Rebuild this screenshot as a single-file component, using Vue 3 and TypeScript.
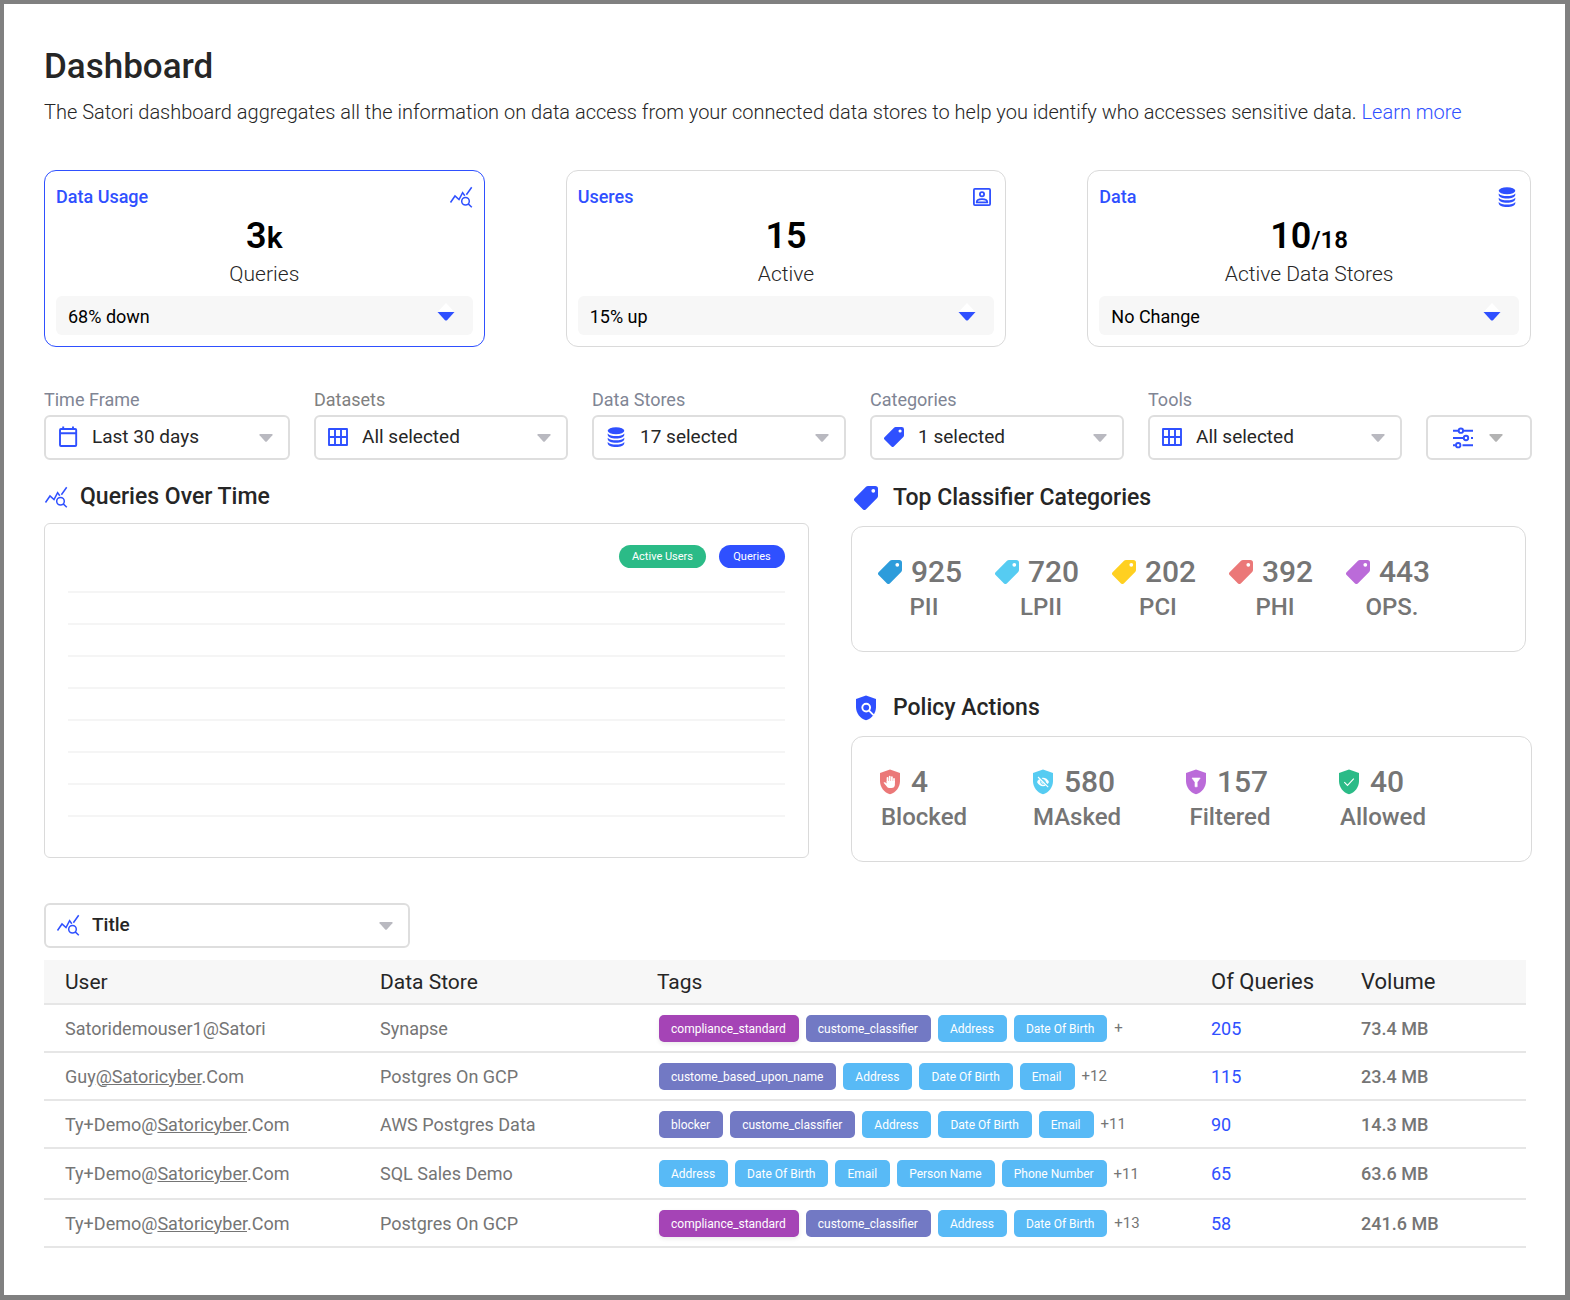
<script setup lang="ts">
interface Summary {
  title: string
  icon: string
  value: string
  suffix: string
  unit?: boolean
  caption: string
  trend: string
  active: boolean
}

interface Filter {
  id: string
  label: string
  icon: string
  value: string
  neutral?: boolean
}

interface Stat {
  icon: string
  color: string
  value: number
  caption: string
}

interface Tag {
  text: string
  kind: 'standard' | 'custom' | 'basic'
}

interface Row {
  user: [string, string, string]
  store: string
  tags: Tag[]
  more: string
  queries: number
  volume: string
}

const summaries: Summary[] = [
  { title: 'Data Usage', icon: 'query', value: '3', suffix: 'k', unit: true, caption: 'Queries', trend: '68% down', active: true },
  { title: 'Useres', icon: 'account', value: '15', suffix: '', caption: 'Active', trend: '15% up', active: false },
  { title: 'Data', icon: 'database', value: '10', suffix: '/18', caption: 'Active Data Stores', trend: 'No Change', active: false },
]

const filters: Filter[] = [
  { id: 'time-frame', label: 'Time Frame', icon: 'calendar', value: 'Last 30 days' },
  { id: 'datasets', label: 'Datasets', icon: 'grid', value: 'All selected', neutral: true },
  { id: 'data-stores', label: 'Data Stores', icon: 'database', value: '17 selected' },
  { id: 'categories', label: 'Categories', icon: 'tag', value: '1 selected' },
  { id: 'tools', label: 'Tools', icon: 'grid', value: 'All selected' },
]

const classifiers: Stat[] = [
  { icon: 'tag', color: '#2d9cdb', value: 925, caption: 'PII' },
  { icon: 'tag', color: '#56ccf2', value: 720, caption: 'LPII' },
  { icon: 'tag', color: '#ffd021', value: 202, caption: 'PCI' },
  { icon: 'tag', color: '#eb7878', value: 392, caption: 'PHI' },
  { icon: 'tag', color: '#bb6bd9', value: 443, caption: 'OPS.' },
]

const policies: Stat[] = [
  { icon: 'shield-hand', color: '#eb7878', value: 4, caption: 'Blocked' },
  { icon: 'shield-eye', color: '#56ccf2', value: 580, caption: 'MAsked' },
  { icon: 'shield-filter', color: '#bb6bd9', value: 157, caption: 'Filtered' },
  { icon: 'shield-check', color: '#2bbb87', value: 40, caption: 'Allowed' },
]

const standard: Tag = { text: 'compliance_standard', kind: 'standard' }
const classifier: Tag = { text: 'custome_classifier', kind: 'custom' }
const basedUpon: Tag = { text: 'custome_based_upon_name', kind: 'custom' }
const blocker: Tag = { text: 'blocker', kind: 'custom' }
const address: Tag = { text: 'Address', kind: 'basic' }
const birth: Tag = { text: 'Date Of Birth', kind: 'basic' }
const email: Tag = { text: 'Email', kind: 'basic' }
const person: Tag = { text: 'Person Name', kind: 'basic' }
const phone: Tag = { text: 'Phone Number', kind: 'basic' }

const rows: Row[] = [
  { user: ['Satoridemouser1@Satori', '', ''], store: 'Synapse', tags: [standard, classifier, address, birth], more: '+', queries: 205, volume: '73.4 MB' },
  { user: ['Guy', '@Satoricyber', '.Com'], store: 'Postgres On GCP', tags: [basedUpon, address, birth, email], more: '+12', queries: 115, volume: '23.4 MB' },
  { user: ['Ty+Demo@', 'Satoricyber', '.Com'], store: 'AWS Postgres Data', tags: [blocker, classifier, address, birth, email], more: '+11', queries: 90, volume: '14.3 MB' },
  { user: ['Ty+Demo@', 'Satoricyber', '.Com'], store: 'SQL Sales Demo', tags: [address, birth, email, person, phone], more: '+11', queries: 65, volume: '63.6 MB' },
  { user: ['Ty+Demo@', 'Satoricyber', '.Com'], store: 'Postgres On GCP', tags: [standard, classifier, address, birth], more: '+13', queries: 58, volume: '241.6 MB' },
]
</script>

<template>
  <main class="page">
    <svg class="sprite" aria-hidden="true">
      <symbol id="query" viewBox="0 0 24 24">
        <g fill="none" stroke="currentColor" stroke-width="1.5">
          <path d="M1.5 17.5 6 11l4 3.6 3.6-7 2.2 3.1M17.4 9.8l5.3-7.6" />
          <circle cx="16.5" cy="16.2" r="3.8" />
          <path d="m19.2 18.9 3.6 3.3" />
        </g>
      </symbol>
      <symbol id="account" viewBox="0 0 24 24">
        <g fill="none" stroke="currentColor" stroke-width="1.8">
          <rect x="3.9" y="3.9" width="16.2" height="16.2" rx="1" />
          <circle cx="12" cy="9.2" r="2.1" />
          <path d="M6.7 17.4c0-2.2 2.8-3.2 5.3-3.2s5.3 1 5.3 3.2z" stroke-linejoin="round" />
        </g>
      </symbol>
      <symbol id="database" viewBox="0 0 24 24">
        <g fill="currentColor">
          <ellipse cx="12" cy="5.7" rx="8.3" ry="3.5" />
          <path d="M3.7 8.5c1.5 1.900 4.700 2.500 8.300 2.500s6.800-.6 8.300-2.500v1c0 2.700-3.700 4-8.300 4s-8.300-1.300-8.300-4z" />
          <path d="M3.700 12.700c1.500 1.900 4.700 2.500 8.300 2.500s6.800-.6 8.300-2.500v1c0 2.700-3.700 4-8.300 4s-8.300-1.300-8.300-4z" />
          <path d="M3.700 16.900c1.500 1.900 4.700 2.500 8.300 2.500s6.800-.6 8.300-2.500v1c0 2.700-3.700 4-8.300 4s-8.300-1.300-8.300-4z" />
        </g>
      </symbol>
      <symbol id="calendar" viewBox="0 0 24 24">
        <g fill="none" stroke="currentColor" stroke-width="1.9">
          <rect x="4" y="4" width="16.2" height="17" rx="1" />
          <path d="M4 8.2h16.2M7.200 1.500V4M17 1.500V4" />
        </g>
      </symbol>
      <symbol id="grid" viewBox="0 0 24 24">
        <path d="M3 4h18v16H3zM9 4v16M15 4v16M3 12h18" fill="none" stroke="currentColor" stroke-width="1.9" stroke-linejoin="round" />
      </symbol>
      <symbol id="tag" viewBox="0 0 24 24">
        <path
          fill="currentColor"
          fill-rule="evenodd"
          d="M12 .8Q12.800 0 14 0h7.200Q24 0 24 2.800V10q0 1.200-.8 2L11.800 23.400q-1.400 1.400-2.800 0L.6 15q-1.300-1.400 0-2.800zM19.300 2.900a1.900 1.900 0 1 0 0 3.800 1.900 1.900 0 0 0 0-3.800z"
        />
      </symbol>
      <symbol id="tune" viewBox="0 0 24 24">
        <g fill="none" stroke="currentColor" stroke-width="1.9">
          <path d="M2 4.700h5.500M13 4.700h9M2 12h10.500M20 12h2M2 19.200h2.500M11.500 19.200H22" />
          <circle cx="9.900" cy="4.700" r="2.200" />
          <circle cx="15" cy="12" r="2.200" />
          <circle cx="7.200" cy="19.200" r="2.200" />
        </g>
      </symbol>
      <symbol id="caret" viewBox="0 0 14 8">
        <path d="M1 0h12q1 .3.400 1.200L7.800 7.500q-.8.700-1.600 0L.6 1.200Q0 .3 1 0z" fill="currentColor" />
      </symbol>
      <symbol id="shield-search" viewBox="0 0 24 26">
        <path d="M12 .5 22 4v8c0 6.500-4.300 11.500-10 13.300C6.300 23.500 2 18.500 2 12V4z" fill="currentColor" />
        <circle cx="12.200" cy="12.600" r="3.900" fill="none" stroke="#fff" stroke-width="1.900" />
        <path d="m14.800 15.400 5 5" stroke="#fff" stroke-width="1.900" />
      </symbol>
      <symbol id="shield-hand" viewBox="0 0 24 26">
        <path d="M12 .5 22 4v8c0 6.500-4.300 11.500-10 13.300C6.300 23.500 2 18.500 2 12V4z" fill="currentColor" />
        <g fill="none" stroke="#fff" stroke-width="1.700" stroke-linecap="round">
          <path d="M9.500 13V8.800M11.700 12V7.500M13.900 12V8M16 13V9.800" />
        </g>
        <path d="M8.700 12h8.200v3.800c0 2-1.300 3.300-3.400 3.300h-1.700c-1.200 0-2-.4-2.800-1.400l-3.400-3.900c.7-.8 1.600-.5 3.100.8z" fill="#fff" />
      </symbol>
      <symbol id="shield-eye" viewBox="0 0 24 26">
        <path d="M12 .5 22 4v8c0 6.500-4.300 11.500-10 13.300C6.300 23.500 2 18.500 2 12V4z" fill="currentColor" />
        <path d="M6 13c1.200-2.700 3.500-4.200 6-4.200s4.800 1.500 6 4.200c-1.200 2.700-3.500 4.200-6 4.200S7.200 15.700 6 13z" fill="#fff" />
        <circle cx="12" cy="13" r="2.300" fill="none" stroke="currentColor" stroke-width="1" />
        <path d="m7 7.200 10.500 10.500" stroke="currentColor" stroke-width="2.400" />
        <path d="m7 8 10.200 10.200" stroke="#fff" stroke-width="1.100" />
      </symbol>
      <symbol id="shield-filter" viewBox="0 0 24 26">
        <path d="M12 .5 22 4v8c0 6.500-4.300 11.500-10 13.300C6.300 23.500 2 18.500 2 12V4z" fill="currentColor" />
        <path d="M8 9h8.200l-3 4.200v4.600h-2.200v-4.600z" fill="#fff" stroke="#fff" stroke-width=".6" stroke-linejoin="round" />
      </symbol>
      <symbol id="shield-check" viewBox="0 0 24 26">
        <path d="M12 .5 22 4v8c0 6.500-4.300 11.500-10 13.300C6.300 23.500 2 18.500 2 12V4z" fill="currentColor" />
        <path d="m7.300 13.200 3.200 3.200 6.300-6.800" fill="none" stroke="#fff" stroke-width="1.100" />
      </symbol>
    </svg>

    <header>
      <h1>Dashboard</h1>
      <p class="intro">
        The Satori dashboard aggregates all the information on data access from your connected data stores to help you
        identify who accesses sensitive data. <a href="#">Learn more</a>
      </p>
    </header>

    <section class="summaries">
      <article v-for="s in summaries" :key="s.title" class="card" :class="{ active: s.active }">
        <div class="card-head">
          <h2>{{ s.title }}</h2>
          <svg class="icon"><use :href="`#${s.icon}`" /></svg>
        </div>
        <p class="value">{{ s.value }}<small v-if="s.suffix" :class="{ unit: s.unit }">{{ s.suffix }}</small></p>
        <p class="caption">{{ s.caption }}</p>
        <button type="button" class="trend">
          {{ s.trend }}
          <svg class="arrows" viewBox="0 0 18 18" aria-hidden="true">
            <path d="M9 0l8 8.500H1z" fill="#fff" />
            <path d="M.5 9h17L10 17.200q-1 .8-2 0z" fill="#2f50ff" />
          </svg>
        </button>
      </article>
    </section>

    <section class="filters">
      <div v-for="f in filters" :key="f.id" class="field">
        <label :for="f.id" :class="{ neutral: f.neutral }">{{ f.label }}</label>
        <div class="select">
          <select :id="f.id">
            <option>{{ f.value }}</option>
          </select>
          <svg class="icon lead" :class="{ small: f.icon === 'tag' }"><use :href="`#${f.icon}`" /></svg>
          <svg class="caret"><use href="#caret" /></svg>
        </div>
      </div>
      <button type="button" class="tune" aria-label="More filters">
        <svg class="icon"><use href="#tune" /></svg>
        <svg class="button-caret"><use href="#caret" /></svg>
      </button>
    </section>

    <section class="panels">
      <div class="left">
        <h2 class="heading"><svg class="icon"><use href="#query" /></svg>Queries Over Time</h2>
        <div class="chart">
          <div class="legend">
            <button type="button" class="pill users">Active Users</button>
            <button type="button" class="pill queries">Queries</button>
          </div>
          <div class="lines">
            <div v-for="n in 8" :key="n" class="line"></div>
          </div>
        </div>
      </div>
      <div class="right">
        <h2 class="heading wide"><svg class="icon"><use href="#tag" /></svg>Top Classifier Categories</h2>
        <div class="stats classifiers">
          <div v-for="c in classifiers" :key="c.caption" class="stat">
            <div class="figure">
              <svg class="icon" :style="{ color: c.color }"><use :href="`#${c.icon}`" /></svg>{{ c.value }}
            </div>
            <div class="name">{{ c.caption }}</div>
          </div>
        </div>
        <h2 class="heading wide second"><svg class="shield"><use href="#shield-search" /></svg>Policy Actions</h2>
        <div class="stats policies">
          <div v-for="p in policies" :key="p.caption" class="stat">
            <div class="figure">
              <svg class="shield" :style="{ color: p.color }"><use :href="`#${p.icon}`" /></svg>{{ p.value }}
            </div>
            <div class="name">{{ p.caption }}</div>
          </div>
        </div>
      </div>
    </section>

    <section>
      <div class="select title-select">
        <select aria-label="Report">
          <option>Title</option>
        </select>
        <svg class="icon lead"><use href="#query" /></svg>
        <svg class="caret"><use href="#caret" /></svg>
      </div>
      <table>
        <colgroup>
          <col class="c-user" />
          <col class="c-store" />
          <col class="c-tags" />
          <col class="c-queries" />
          <col class="c-volume" />
        </colgroup>
        <thead>
          <tr>
            <th>User</th>
            <th>Data Store</th>
            <th>Tags</th>
            <th class="large">Of Queries</th>
            <th class="large">Volume</th>
          </tr>
        </thead>
        <tbody>
          <tr v-for="(r, i) in rows" :key="i">
            <td>{{ r.user[0] }}<u>{{ r.user[1] }}</u>{{ r.user[2] }}</td>
            <td>{{ r.store }}</td>
            <td>
              <div class="tags">
                <span v-for="t in r.tags" :key="t.text" class="tag" :class="t.kind">{{ t.text }}</span>
                <span class="more">{{ r.more }}</span>
              </div>
            </td>
            <td><a href="#">{{ r.queries }}</a></td>
            <td class="volume">{{ r.volume }}</td>
          </tr>
        </tbody>
      </table>
    </section>
  </main>
</template>

<style>
body {
  margin: 0;
  background: #fff;
}
</style>

<style scoped>
* {
  box-sizing: border-box;
}

.page {
  min-height: 100vh;
  padding: 39px 33px 40px 40px;
  border: solid #808080;
  border-width: 4px 5px 5px 4px;
  background: #fff;
  color: #262626;
  font-family: Roboto, 'Open Sans', sans-serif;
  font-size: 18px;
}

.sprite {
  position: absolute;
  width: 0;
  height: 0;
}

h1,
h2,
p {
  margin: 0;
}

h1 {
  font-size: 35px;
  line-height: 48px;
  font-weight: 500;
}

a {
  color: #2f50ff;
  text-decoration: none;
}

button,
select {
  font: inherit;
  color: inherit;
}

.intro {
  margin-top: 5px;
  font-size: 20px;
  line-height: 32px;
  font-weight: 300;
}

.icon {
  display: block;
  flex: none;
  width: 24px;
  height: 24px;
  color: #2f50ff;
}

.shield {
  display: block;
  flex: none;
  width: 24px;
  height: 26px;
  color: #2f50ff;
}

.summaries {
  display: grid;
  grid-template-columns: 441fr 441fr 444fr;
  gap: 81px;
  margin: 42px 1px 0 0;
}

.card {
  padding: 14px 11px 11px;
  border: 1px solid #dadada;
  border-radius: 12px;
  text-align: center;
}

.card.active {
  border-color: #2f50ff;
}

.card-head {
  display: flex;
  justify-content: space-between;
  align-items: center;
}

.card-head h2 {
  color: #2f50ff;
  font-size: 18px;
  line-height: 24px;
  font-weight: 500;
}

.value {
  height: 44px;
  margin-top: 5px;
  color: #000;
  font-size: 36px;
  line-height: 44px;
  font-weight: 600;
}

.value small {
  font-size: 24px;
  line-height: 1;
}

.value .unit {
  font-size: 30px;
}

.caption {
  font-size: 21px;
  line-height: 32px;
  font-weight: 300;
}

.trend {
  display: flex;
  justify-content: space-between;
  align-items: center;
  width: 100%;
  height: 39px;
  margin-top: 6px;
  padding: 1px 18px 0 12px;
  border: 0;
  border-radius: 6px;
  background: #f7f7f7;
  color: #000;
}

.arrows {
  align-self: flex-start;
  width: 18px;
  height: 18px;
  margin-top: 6px;
}

.filters {
  display: grid;
  grid-template-columns: 246fr repeat(4, 254fr) 106fr;
  gap: 24px;
  align-items: end;
  margin-top: 41px;
}

.field label {
  display: block;
  margin-bottom: 3px;
  color: #808594;
  line-height: 24px;
}

.field label.neutral {
  color: #808080;
}

.select {
  position: relative;
  font-size: 19px;
}

.select select {
  display: block;
  width: 100%;
  height: 45px;
  padding: 0 40px 2px 46px;
  border: 2px solid #dedede;
  border-radius: 6px;
  background: #fff;
  appearance: none;
}

.lead {
  position: absolute;
  top: 10px;
  left: 12px;
  pointer-events: none;
}

.lead.small {
  top: 12px;
  left: 14px;
  width: 20px;
  height: 20px;
}

.caret {
  position: absolute;
  top: 19px;
  right: 17px;
  width: 14px;
  height: 8px;
  color: #b9b9c0;
  pointer-events: none;
}

.tune {
  display: flex;
  justify-content: center;
  align-items: center;
  gap: 14px;
  height: 45px;
  padding: 0 4px 0 0;
  border: 2px solid #dedede;
  border-radius: 6px;
  background: #fff;
}

.button-caret {
  width: 14px;
  height: 8px;
  color: #b3b3b3;
}

.panels {
  display: grid;
  grid-template-columns: 765fr 681fr;
  gap: 42px;
  margin-top: 21px;
}

.heading {
  display: flex;
  align-items: center;
  gap: 12px;
  font-size: 23px;
  line-height: 32px;
  font-weight: 500;
}

.heading.wide {
  gap: 15px;
  margin-top: 1px;
  padding-left: 3px;
}

.heading.wide.second {
  margin-top: 40px;
}

.chart {
  height: 335px;
  margin-top: 10px;
  padding: 21px 23px;
  border: 1px solid #dadada;
  border-radius: 6px;
}

.legend {
  display: flex;
  justify-content: flex-end;
  gap: 13px;
}

.pill {
  min-width: 66px;
  height: 23px;
  padding: 0 13px;
  border: 0;
  border-radius: 12px;
  color: #fff;
  font-size: 11px;
}

.pill.users {
  background: #2bbb87;
}

.pill.queries {
  background: #2f50ff;
}

.lines {
  display: grid;
  gap: 30px;
  margin-top: 23px;
}

.line {
  height: 2px;
  background: #f5f5f5;
}

.stats {
  display: flex;
  height: 126px;
  margin-top: 12px;
  padding: 27px 24px;
  border: 1px solid #dadada;
  border-radius: 12px;
  color: #757575;
}

.classifiers {
  gap: 21px;
  margin-right: 6px;
}

.policies {
  gap: 57px;
}

.stat {
  width: 96px;
}

.figure {
  display: flex;
  align-items: center;
  gap: 9px;
  padding-left: 2px;
  font-size: 30px;
  line-height: 36px;
  font-weight: 500;
}

.name {
  font-size: 24px;
  line-height: 34px;
  font-weight: 500;
  text-align: center;
}

.title-select {
  width: 366px;
  margin-top: 41px;
  font-weight: 500;
}

table {
  width: calc(100% - 6px);
  margin-top: 12px;
  border-collapse: separate;
  border-spacing: 0;
  table-layout: fixed;
}

.c-user {
  width: 315px;
}

.c-store {
  width: 277px;
}

.c-queries {
  width: 150px;
}

.c-volume {
  width: 186px;
}

th,
td {
  padding: 0 0 0 21px;
  border-bottom: 2px solid #e6e6e6;
  text-align: left;
}

th {
  height: 45px;
  background: #f7f7f7;
  font-size: 21px;
  font-weight: 400;
}

th.large {
  font-size: 22px;
}

td {
  height: 48px;
  color: #757575;
}

tr:nth-child(4) td {
  height: 51px;
}

.tags {
  display: flex;
  align-items: center;
  gap: 7px;
  padding-left: 2px;
}

.tag {
  padding: 1px 13px 0 12px;
  border-radius: 5px;
  color: #fff;
  font-size: 12px;
  line-height: 26px;
  white-space: nowrap;
}

.standard {
  background: #a544b6;
  box-shadow: 0 2px 4px #00000014;
}

.custom {
  background: #7279c4;
}

.basic {
  background: #58baf6;
}

.more {
  font-size: 15px;
}

.volume {
  font-weight: 500;
}
</style>
